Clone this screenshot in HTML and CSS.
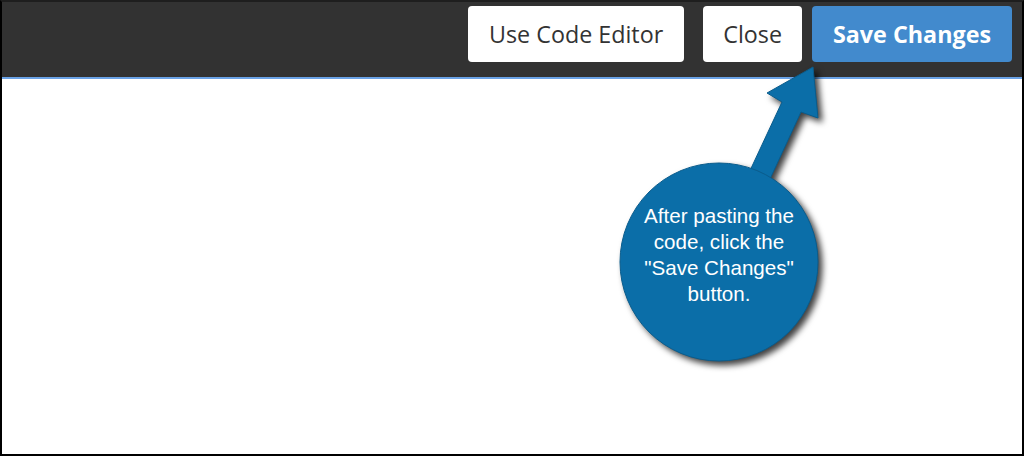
FILE: index.html
```html
<!DOCTYPE html>
<html>
<head>
<meta charset="utf-8">
<link rel="stylesheet" href="styles.css">
</head>
<body>
<div class="frame">
  <header class="toolbar">
    <button class="btn btn-light">Use Code Editor</button>
    <button class="btn btn-light btn-close">Close</button>
    <button class="btn btn-primary">Save Changes</button>
  </header>
  <main class="canvas"></main>
  <svg class="callout-art" width="260" height="320" viewBox="0 0 260 320">
    <g class="callout-shape">
      <polygon points="213,7 218,58 201,52 164,132 140,132 182,42 167,33" />
      <circle cx="119" cy="202" r="99" />
    </g>
  </svg>
  <div class="callout-text">After pasting the code, click the "Save Changes" button.</div>
</div>
</body>
</html>
```

FILE: styles.css
```css
html, body {
  margin: 0;
  padding: 0;
  background: #fff;
}
.frame {
  position: relative;
  width: 1024px;
  height: 456px;
  box-sizing: border-box;
  border: 2px solid #000;
  border-top-color: #1e1e1e;
  display: flex;
  flex-direction: column;
  overflow: hidden;
}
.toolbar {
  height: 71px;
  background: #323232;
  border-bottom: 2px solid #6aa2e6;
  display: flex;
  justify-content: flex-end;
  align-items: flex-start;
  padding: 4px 10px 0 0;
  box-sizing: content-box;
  flex: none;
}
.btn {
  height: 56px;
  padding: 0 21px;
  border: none;
  border-radius: 4px;
  font-family: "Open Sans", sans-serif;
  font-size: 23.3px;
  line-height: 56px;
  cursor: pointer;
}
.btn-light {
  background: #fff;
  color: #333;
  margin-right: 19px;
}
.btn-close {
  margin-right: 10px;
  padding: 0 20px;
}
.btn-primary {
  background: #428acd;
  color: #fff;
  font-weight: 700;
}
.canvas {
  flex: 1;
  background: #fff;
}
.callout-art {
  position: absolute;
  left: 598px;
  top: 58px;
  overflow: visible;
}
.callout-shape {
  fill: #0b6ea8;
  stroke: #0a5c8c;
  stroke-width: 1;
  filter: drop-shadow(4px 4px 3px rgba(0, 0, 0, 0.75));
}
.callout-text {
  position: absolute;
  left: 622px;
  top: 201px;
  width: 190px;
  text-align: center;
  color: #fff;
  font-family: "Liberation Sans", Arial, sans-serif;
  font-size: 20.6px;
  line-height: 26px;
}
```
